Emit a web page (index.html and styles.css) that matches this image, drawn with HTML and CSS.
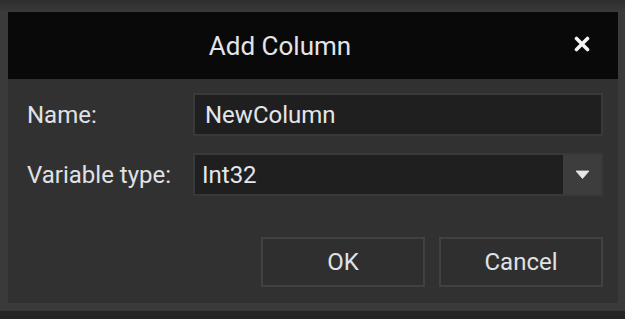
FILE: index.html
```html
<!DOCTYPE html>
<html>
<head>
<meta charset="utf-8">
<link rel="stylesheet" href="styles.css">
</head>
<body>
<div class="frame">
  <div class="dialog">
    <div class="titlebar">
      <span class="title">Add Column</span>
      <span class="close" aria-label="Close">
        <svg width="16" height="16" viewBox="0 0 16 16"><path d="M2.5 2.5 L13.5 13.5 M13.5 2.5 L2.5 13.5" stroke="#f4f4f4" stroke-width="3.6" stroke-linecap="round"/></svg>
      </span>
    </div>
    <div class="content">
      <div class="form">
        <label class="label">Name:</label>
        <div class="input">NewColumn</div>
        <label class="label">Variable type:</label>
        <div class="select">
          <span class="select-value">Int32</span>
          <span class="select-btn"><svg width="15" height="9" viewBox="0 0 15 9"><path d="M1 1 L14 1 L7.5 8.5 Z" fill="#e8e8e8" stroke="#e8e8e8" stroke-width="0.8" stroke-linejoin="round"/></svg></span>
        </div>
      </div>
      <div class="buttons">
        <div class="btn">OK</div>
        <div class="btn">Cancel</div>
      </div>
    </div>
  </div>
</div>
</body>
</html>
```

FILE: styles.css
```css
html, body {
  margin: 0;
  padding: 0;
}
body {
  width: 625px;
  height: 319px;
  background: #252525;
  font-family: Roboto, "Liberation Sans", sans-serif;
  color: #e2e2e2;
  overflow: hidden;
}
.frame {
  box-sizing: border-box;
  width: 625px;
  height: 311px;
  background: linear-gradient(#2e2e2e, #3a3a3a 12px, #3a3a3a 100%);
  padding: 12px 7px 8px 8px;
}
.dialog {
  display: flex;
  flex-direction: column;
  height: 100%;
}
.titlebar {
  box-sizing: border-box;
  height: 67px;
  background: #090909;
  display: flex;
  align-items: center;
  justify-content: center;
  padding-right: 66px;
  position: relative;
}
.title {
  font-size: 26px;
  color: #e2e4e8;
}
.close {
  position: absolute;
  right: 28px;
  top: 24px;
  width: 16px;
  height: 16px;
  display: flex;
}
.content {
  flex: 1;
  background: #313131;
  padding: 14px 15px 16px 19px;
  display: flex;
  flex-direction: column;
}
.form {
  display: grid;
  grid-template-columns: 166px 1fr;
  row-gap: 17px;
  align-items: center;
}
.label {
  font-size: 24px;
  color: #e0e2e6;
}
.input, .select {
  box-sizing: border-box;
  height: 43px;
  background: #1f1f1f;
  border: 2px solid #393939;
  font-size: 24px;
  color: #e4e6ea;
  display: flex;
  align-items: center;
}
.input {
  padding-left: 10px;
}
.select-value {
  flex: 1;
  padding-left: 7px;
}
.select-btn {
  width: 38px;
  height: 100%;
  background: #3d3d3d;
  display: flex;
  align-items: center;
  justify-content: center;
}
.buttons {
  margin-top: auto;
  display: flex;
  justify-content: flex-end;
  gap: 14px;
}
.btn {
  box-sizing: border-box;
  width: 164px;
  height: 50px;
  border: 2px solid #414141;
  background: #2f2f2f;
  display: flex;
  align-items: center;
  justify-content: center;
  font-size: 24px;
  color: #e0e2e6;
}
```
